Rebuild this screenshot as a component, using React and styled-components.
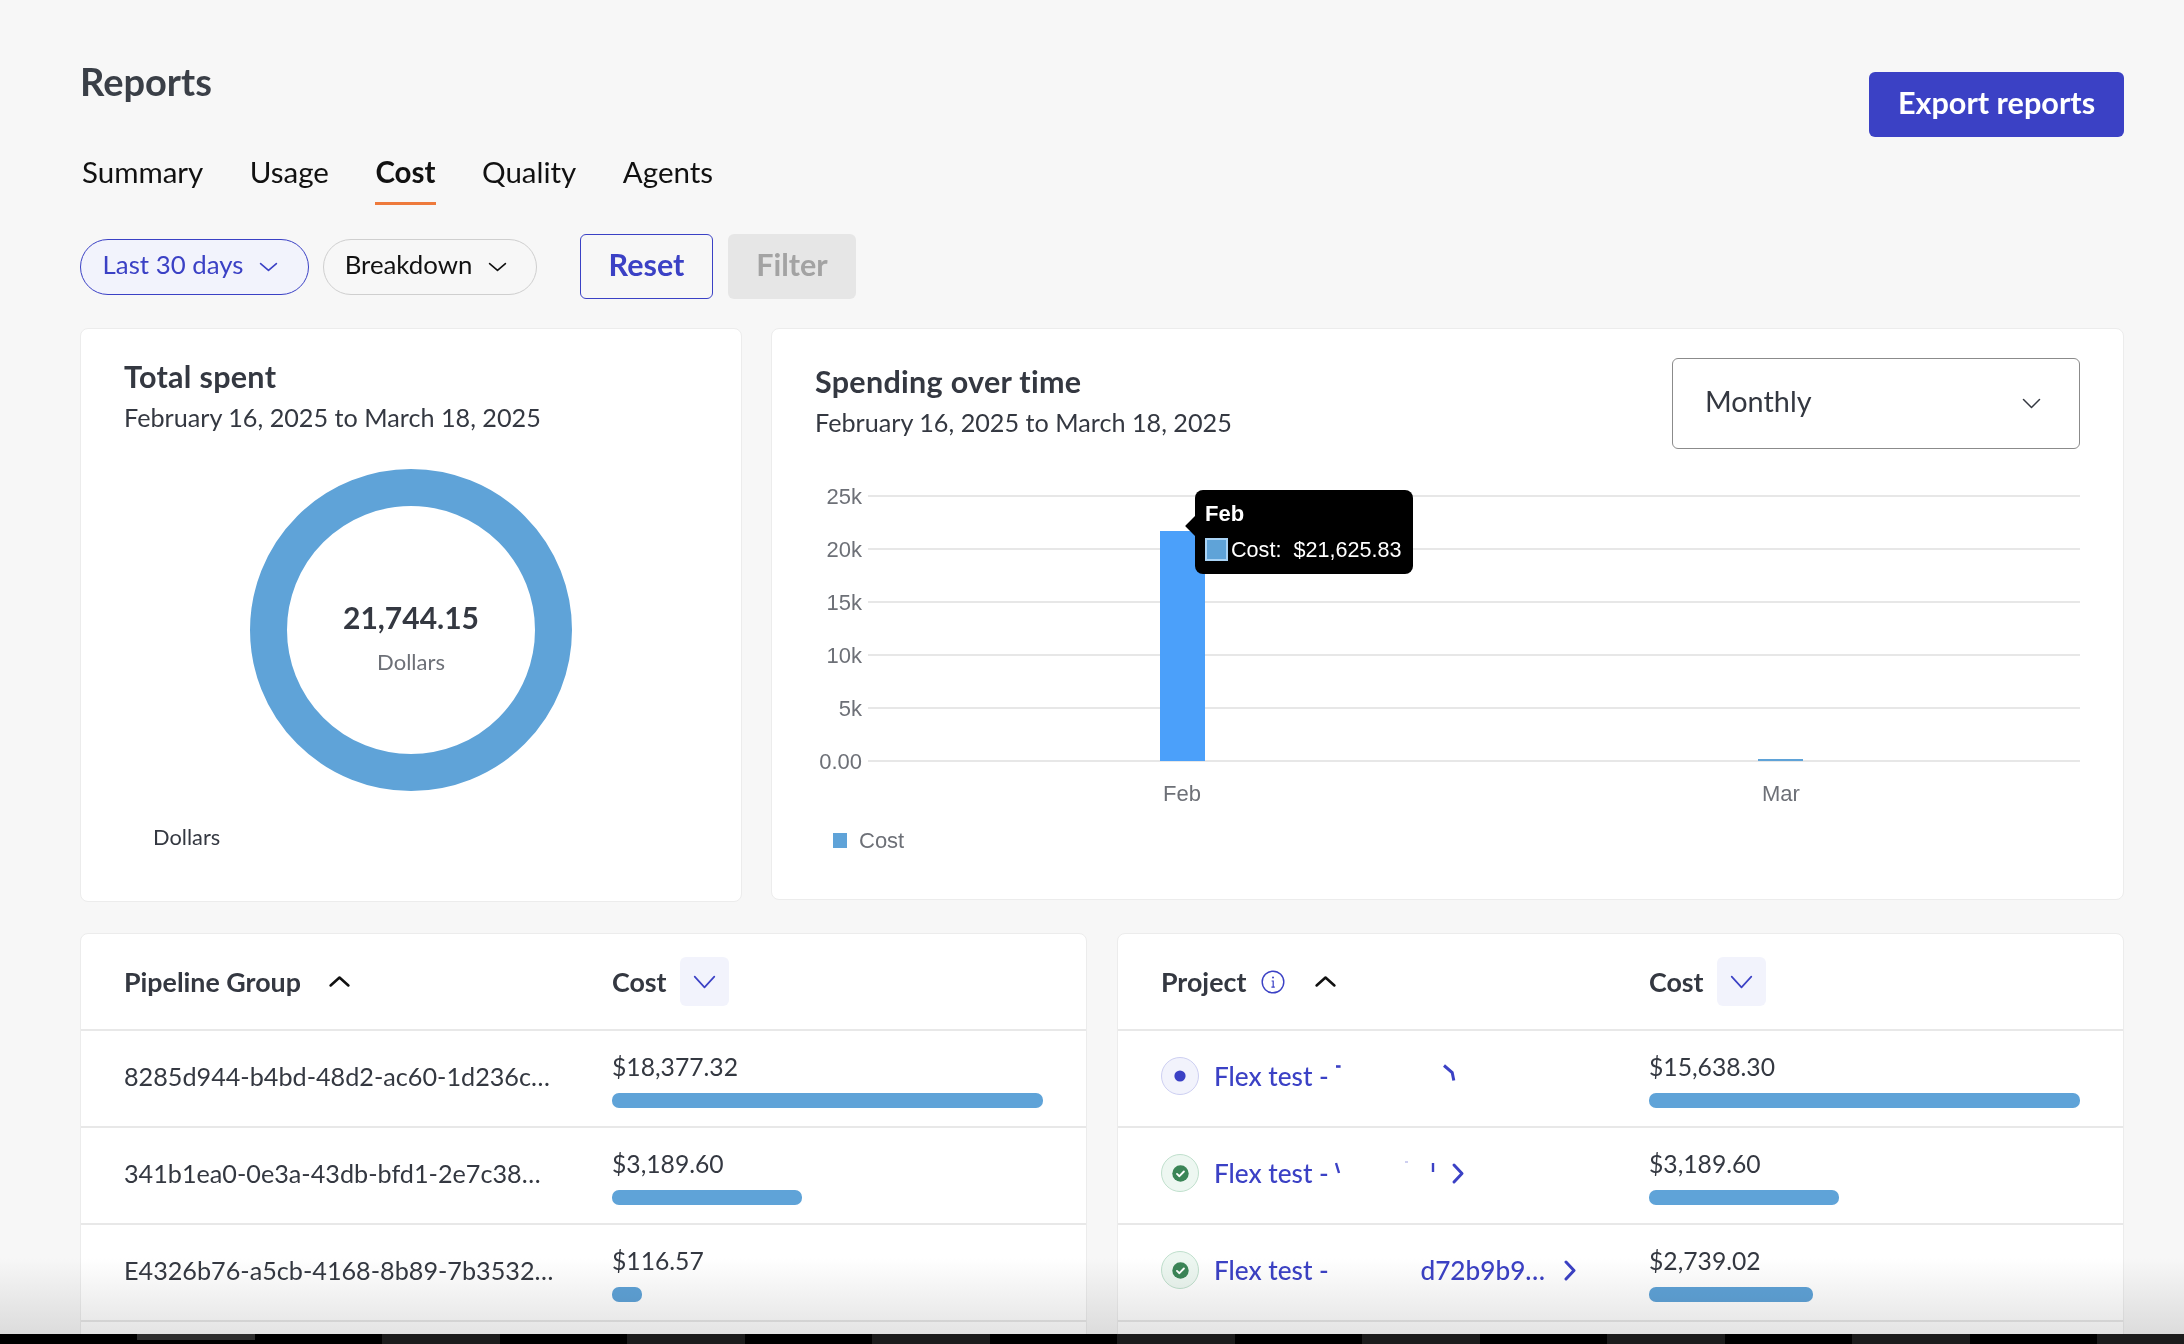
import styled, { createGlobalStyle } from "styled-components";

const BLUE = "#3b41c5";
const BAR = "#5fa3d8";
const INK = "#343841";
const LINE = "#e8e8e8";

const pipelineRows = [
  { name: "8285d944-b4bd-48d2-ac60-1d236c…", cost: "$18,377.32", width: 100 },
  { name: "341b1ea0-0e3a-43db-bfd1-2e7c38…", cost: "$3,189.60", width: 44 },
  { name: "E4326b76-a5cb-4168-8b89-7b3532…", cost: "$116.57", width: 7 },
];

const yTicks = [
  { label: "25k", y: 11 },
  { label: "20k", y: 64 },
  { label: "15k", y: 117 },
  { label: "10k", y: 170 },
  { label: "5k", y: 223 },
  { label: "0.00", y: 276 },
];

const Chevron = ({ dir = "down", w = 19, h = 10, sw = 1.6, color = "currentColor" }) => {
  const m = sw;
  const paths = {
    down: `M${m} ${m}L${w / 2} ${h - m}L${w - m} ${m}`,
    up: `M${m} ${h - m}L${w / 2} ${m}L${w - m} ${h - m}`,
    right: `M${m} ${m}L${w - m} ${h / 2}L${m} ${h - m}`,
  };
  return (
    <svg width={w} height={h} viewBox={`0 0 ${w} ${h}`} fill="none">
      <path d={paths[dir]} stroke={color} strokeWidth={sw} strokeLinecap="round" strokeLinejoin="round" />
    </svg>
  );
};

const InfoIcon = () => (
  <svg width="24" height="24" viewBox="0 0 24 24" fill="none">
    <circle cx="12" cy="12" r="10.8" stroke={BLUE} strokeWidth="1.4" />
    <circle cx="12" cy="7.6" r="1" fill={BLUE} />
    <path d="M10.6 11h1.6v6M10.4 17.2h3.4" stroke={BLUE} strokeWidth="1.2" />
  </svg>
);

const RunningIcon = () => (
  <StatusRing $bg="#f2f3fc" $border="#cdcff2">
    <svg width="12" height="12" viewBox="0 0 12 12">
      <circle cx="6" cy="6" r="5.6" fill={BLUE} />
    </svg>
  </StatusRing>
);

const DoneIcon = () => (
  <StatusRing $bg="#edf7f1" $border="#c0e0cd">
    <svg width="17" height="17" viewBox="0 0 17 17">
      <circle cx="8.5" cy="8.5" r="8.2" fill="#3b8557" />
      <path d="M5 8.9l2.4 2.3 4.5-4.7" fill="none" stroke="#fff" strokeWidth="1.9" strokeLinecap="round" strokeLinejoin="round" />
    </svg>
  </StatusRing>
);

// bits of the project names left showing around the redaction in the screenshot
const FirstRemnant = () => (
  <svg width="124" height="28" viewBox="0 0 124 28" fill="none">
    <path d="M1 4.5h4.6" stroke={BLUE} strokeWidth="2.6" />
    <path d="M109 3.5l8.2 7 1.6 8" stroke={BLUE} strokeWidth="3" />
  </svg>
);

const SecondRemnant = () => (
  <svg width="110" height="28" viewBox="0 0 110 28" fill="none">
    <path d="M1 4l3 10" stroke={BLUE} strokeWidth="2.4" />
    <path d="M70 3h3" stroke={BLUE} strokeWidth="1" opacity="0.5" />
    <path d="M98 4v9" stroke={BLUE} strokeWidth="2.4" />
  </svg>
);

const App = () => (
  <Page>
    <GlobalStyle />
    <Header>
      <div>
        <Title>Reports</Title>
        <Tabs>
          <Tab>Summary</Tab>
          <Tab>Usage</Tab>
          <Tab $active>Cost</Tab>
          <Tab>Quality</Tab>
          <Tab>Agents</Tab>
        </Tabs>
      </div>
      <ExportButton>Export reports</ExportButton>
    </Header>

    <Filters>
      <Pill $active $width={229}>
        Last 30 days <Chevron />
      </Pill>
      <Pill $width={214}>
        Breakdown <Chevron />
      </Pill>
      <ResetButton>Reset</ResetButton>
      <FilterButton>Filter</FilterButton>
    </Filters>

    <ChartRow>
      <TotalCard>
        <CardTitle>Total spent</CardTitle>
        <DateRange>February 16, 2025 to March 18, 2025</DateRange>
        <Donut>
          <svg width="322" height="322" viewBox="0 0 322 322" fill="none">
            <circle cx="161" cy="161" r="142.5" stroke={BAR} strokeWidth="37" />
          </svg>
          <DonutLabel>
            <DonutValue>21,744.15</DonutValue>
            <DonutUnit>Dollars</DonutUnit>
          </DonutLabel>
        </Donut>
        <DonutLegend>Dollars</DonutLegend>
      </TotalCard>

      <SpendingCard>
        <SpendingHeader>
          <SpendingTitles>
            <CardTitle>Spending over time</CardTitle>
            <DateRange>February 16, 2025 to March 18, 2025</DateRange>
          </SpendingTitles>
          <Select>
            <SelectText>Monthly</SelectText>
            <Chevron w={19} h={11} sw={1.5} color="#343841" />
          </Select>
        </SpendingHeader>
        <ChartArea>
          <svg width="1265" height="325" viewBox="0 0 1265 325" fill="none">
            {yTicks.map((t) => (
              <g key={t.label}>
                <line x1="53" x2="1265" y1={t.y} y2={t.y} stroke="#e7e7e7" strokeWidth="2" />
                <AxisText x="47" y={t.y + 7.5} textAnchor="end">
                  {t.label}
                </AxisText>
              </g>
            ))}
            <rect x="345" y="46" width="45" height="230" fill="#4ba0fa" />
            <rect x="943" y="274" width="45" height="2" fill={BAR} />
            <AxisText x="367" y="316" textAnchor="middle">Feb</AxisText>
            <AxisText x="966" y="316" textAnchor="middle">Mar</AxisText>
          </svg>
          <Tooltip>
            <TooltipTitle>Feb</TooltipTitle>
            <TooltipRow>
              <TooltipSwatch />
              <span>Cost:</span>
              <span>$21,625.83</span>
            </TooltipRow>
          </Tooltip>
        </ChartArea>
        <ChartLegend>
          <LegendSwatch />
          Cost
        </ChartLegend>
      </SpendingCard>
    </ChartRow>

    <TableRow>
      <TableCard>
        <TableHead>
          <HeadCell>
            Pipeline Group
            <SortUp>
              <Chevron dir="up" w={23} h={13} sw={2.6} color="#111" />
            </SortUp>
          </HeadCell>
          <HeadCell>
            Cost
            <SortBox>
              <Chevron w={23} h={14} sw={1.7} color={BLUE} />
            </SortBox>
          </HeadCell>
        </TableHead>
        {pipelineRows.map((row) => (
          <Row key={row.name}>
            <NameCell>{row.name}</NameCell>
            <CostCell>
              <CostValue>{row.cost}</CostValue>
              <CostBar $width={row.width} />
            </CostCell>
          </Row>
        ))}
      </TableCard>

      <TableCard>
        <TableHead>
          <HeadCell>
            Project
            <InfoSlot>
              <InfoIcon />
            </InfoSlot>
            <ProjectSort>
              <Chevron dir="up" w={23} h={13} sw={2.6} color="#111" />
            </ProjectSort>
          </HeadCell>
          <HeadCell>
            Cost
            <SortBox>
              <Chevron w={23} h={14} sw={1.7} color={BLUE} />
            </SortBox>
          </HeadCell>
        </TableHead>
        <Row>
          <ProjectCell>
            <RunningIcon />
            <ProjectLink>Flex test - </ProjectLink>
            <FirstRemnant />
          </ProjectCell>
          <CostCell>
            <CostValue>$15,638.30</CostValue>
            <CostBar $width={100} />
          </CostCell>
        </Row>
        <Row>
          <ProjectCell>
            <DoneIcon />
            <ProjectLink>Flex test - </ProjectLink>
            <SecondRemnant />
            <RowChevron>
              <Chevron dir="right" w={14} h={23} sw={3} color={BLUE} />
            </RowChevron>
          </ProjectCell>
          <CostCell>
            <CostValue>$3,189.60</CostValue>
            <CostBar $width={44} />
          </CostCell>
        </Row>
        <Row>
          <ProjectCell>
            <DoneIcon />
            <ProjectLink>Flex test - </ProjectLink>
            <RedactedGap />
            <ProjectLink>d72b9b9…</ProjectLink>
            <LastChevron>
              <Chevron dir="right" w={14} h={23} sw={3} color={BLUE} />
            </LastChevron>
          </ProjectCell>
          <CostCell>
            <CostValue>$2,739.02</CostValue>
            <CostBar $width={38} />
          </CostCell>
        </Row>
      </TableCard>
    </TableRow>

    <BottomFade />
    <Dock>
      {[0, 1, 2, 3, 4, 5, 6, 7, 8].map((i) => (
        <DockItem key={i} $first={i === 0} />
      ))}
    </Dock>
  </Page>
);

const GlobalStyle = createGlobalStyle`
  html, body {
    margin: 0;
    padding: 0;
    background: #f7f7f7;
  }
  body {
    font-family: Lato, "Open Sans", sans-serif;
    color: ${INK};
  }
`;

const Page = styled.div`
  position: relative;
  width: 2184px;
  height: 1344px;
  padding: 62px 60px 0 80px;
  box-sizing: border-box;
  overflow: hidden;
`;

const Header = styled.div`
  display: flex;
  justify-content: space-between;
  align-items: flex-start;
`;

const Title = styled.h1`
  margin: 0;
  font-size: 38px;
  line-height: 38px;
  font-weight: 700;
  color: #3a3f47;
`;

const Tabs = styled.div`
  display: flex;
  gap: 46.5px;
  margin: 50px 0 0 2px;
`;

const Tab = styled.div`
  font-size: 29.5px;
  line-height: 44px;
  padding-bottom: 8px;
  color: #111;
  font-weight: ${(p) => (p.$active ? 700 : 400)};
  border-bottom: 3px solid ${(p) => (p.$active ? "#ee7a3c" : "transparent")};
`;

const ExportButton = styled.button`
  width: 255px;
  height: 65px;
  margin-top: 10px;
  padding: 0 0 5px;
  border: none;
  border-radius: 6px;
  background: ${BLUE};
  color: #fff;
  font-family: inherit;
  font-size: 30.6px;
  font-weight: 700;
`;

const Filters = styled.div`
  display: flex;
  align-items: center;
  height: 65px;
  margin-top: 29px;
`;

const Pill = styled.div`
  display: flex;
  align-items: center;
  justify-content: center;
  gap: 16px;
  box-sizing: border-box;
  width: ${(p) => p.$width}px;
  height: 56px;
  margin-right: 14px;
  padding: 0 8px 6px 0;
  border-radius: 28px;
  border: 1px solid ${(p) => (p.$active ? BLUE : "#cfcfcf")};
  background: ${(p) => (p.$active ? "#f2f3fc" : "transparent")};
  color: ${(p) => (p.$active ? BLUE : "#111")};
  font-size: 25.8px;

  svg {
    margin-top: 6px;
  }
`;

const ResetButton = styled.button`
  box-sizing: border-box;
  width: 133px;
  height: 65px;
  margin-left: 29px;
  padding: 0 0 6px;
  border: 1.5px solid ${BLUE};
  border-radius: 6px;
  background: transparent;
  color: ${BLUE};
  font-family: inherit;
  font-size: 30.5px;
  font-weight: 700;
`;

const FilterButton = styled.button`
  width: 128px;
  height: 65px;
  margin-left: 15px;
  padding: 0 0 6px;
  border: none;
  border-radius: 6px;
  background: #e6e6e6;
  color: #a3a3a3;
  font-family: inherit;
  font-size: 30.5px;
  font-weight: 700;
`;

const ChartRow = styled.div`
  display: grid;
  grid-template-columns: 662px 1353px;
  gap: 29px;
  align-items: start;
  margin-top: 29px;
`;

const Card = styled.div`
  box-sizing: border-box;
  background: #fff;
  border: 1.5px solid #ececec;
  border-radius: 8px;
`;

const TotalCard = styled(Card)`
  height: 574px;
  padding: 30px 43px 0;
`;

const CardTitle = styled.div`
  font-size: 30.5px;
  line-height: 34px;
  letter-spacing: 0.3px;
  font-weight: 700;
  color: ${INK};
`;

const DateRange = styled.div`
  margin-top: 6px;
  font-size: 25.2px;
  line-height: 36px;
  color: ${INK};
`;

const Donut = styled.div`
  position: relative;
  width: 322px;
  height: 322px;
  margin: 34px auto 0;
`;

const DonutLabel = styled.div`
  position: absolute;
  inset: 0;
  display: flex;
  flex-direction: column;
  align-items: center;
  justify-content: center;
  padding-top: 15px;
  box-sizing: border-box;
`;

const DonutValue = styled.div`
  font-size: 30px;
  line-height: 36px;
  font-weight: 700;
  color: ${INK};
`;

const DonutUnit = styled.div`
  margin-top: 12px;
  font-size: 22px;
  line-height: 30px;
  color: #6d7077;
`;

const DonutLegend = styled.div`
  margin: 29px 0 0 29px;
  font-size: 21.8px;
  line-height: 34px;
  color: ${INK};
`;

const SpendingCard = styled(Card)`
  height: 572px;
  padding: 28.5px 43px 0;
`;

const SpendingHeader = styled.div`
  display: flex;
  justify-content: space-between;
  align-items: flex-start;
`;

const SpendingTitles = styled.div`
  padding-top: 6.5px;
`;

const Select = styled.div`
  display: flex;
  align-items: center;
  justify-content: space-between;
  box-sizing: border-box;
  width: 408px;
  height: 91px;
  padding: 0 38px 0 32px;
  border: 1.5px solid #8b8b8b;
  border-radius: 6px;
  color: ${INK};
`;

const SelectText = styled.span`
  font-size: 28.8px;
  padding-bottom: 4px;
`;

const ChartArea = styled.div`
  position: relative;
  height: 325px;
  margin-top: 36px;
`;

const AxisText = styled.text`
  font-family: "Liberation Sans", Arial, sans-serif;
  font-size: 22px;
  fill: #6d7077;
`;

const Tooltip = styled.div`
  position: absolute;
  left: 380px;
  top: 5px;
  box-sizing: border-box;
  width: 218px;
  height: 84px;
  padding: 9px 10px;
  background: #000;
  border-radius: 8px;
  color: #fff;
  font-family: "Liberation Sans", Arial, sans-serif;
  font-size: 21.6px;

  &::before {
    content: "";
    position: absolute;
    left: -7px;
    top: 29px;
    width: 14px;
    height: 14px;
    background: #000;
    transform: rotate(45deg);
  }
`;

const TooltipTitle = styled.div`
  font-size: 22px;
  line-height: 30px;
  font-weight: 700;
`;

const TooltipRow = styled.div`
  display: flex;
  align-items: center;
  gap: 3px;
  margin-top: 9px;
  line-height: 24px;
  white-space: nowrap;

  span + span {
    margin-left: 9px;
  }
`;

const TooltipSwatch = styled.i`
  display: block;
  flex: none;
  box-sizing: border-box;
  width: 23px;
  height: 23px;
  background: ${BAR};
  border: 2px solid #a9d3f5;
`;

const ChartLegend = styled.div`
  display: flex;
  align-items: center;
  gap: 12px;
  margin: 16px 0 0 18px;
  font-family: "Liberation Sans", Arial, sans-serif;
  font-size: 22px;
  line-height: 30px;
  color: #6d7077;
`;

const LegendSwatch = styled.i`
  display: block;
  width: 14px;
  height: 15px;
  background: ${BAR};
`;

const TableRow = styled.div`
  display: grid;
  grid-template-columns: 1007px 1007px;
  gap: 30px;
  margin-top: 31px;
`;

const TableCard = styled(Card)`
  height: 500px;
`;

const TableHead = styled.div`
  display: grid;
  grid-template-columns: 488px 1fr;
  align-items: center;
  height: 95.4px;
  padding: 0 43px;
  border-bottom: 2px solid ${LINE};
`;

const HeadCell = styled.div`
  display: flex;
  align-items: center;
  font-size: 26.8px;
  font-weight: 700;
  color: ${INK};
`;

const SortUp = styled.span`
  display: flex;
  margin-left: 27px;
`;

const InfoSlot = styled.span`
  display: flex;
  margin-left: 15px;
`;

const ProjectSort = styled.span`
  display: flex;
  margin-left: 29px;
`;

const SortBox = styled.span`
  display: flex;
  align-items: center;
  justify-content: center;
  width: 49px;
  height: 49px;
  margin-left: 13px;
  border-radius: 6px;
  background: #f2f3fc;
`;

const Row = styled.div`
  display: grid;
  grid-template-columns: 488px 1fr;
  box-sizing: border-box;
  height: 97px;
  padding: 0 43px;
  border-bottom: 2px solid ${LINE};
`;

const NameCell = styled.div`
  display: flex;
  align-items: center;
  padding-bottom: 5.6px;
  font-size: 25.2px;
  color: ${INK};
  white-space: nowrap;
`;

const ProjectCell = styled.div`
  display: flex;
  align-items: center;
  padding-bottom: 5.6px;
  white-space: pre;
`;

const StatusRing = styled.span`
  display: flex;
  align-items: center;
  justify-content: center;
  box-sizing: border-box;
  width: 38px;
  height: 38px;
  margin-right: 15px;
  border-radius: 50%;
  background: ${(p) => p.$bg};
  border: 1px solid ${(p) => p.$border};
`;

const ProjectLink = styled.span`
  font-size: 26.2px;
  font-weight: 500;
  color: ${BLUE};
`;

const RedactedGap = styled.span`
  width: 85px;
`;

const RowChevron = styled.span`
  display: flex;
  margin-left: 6px;
`;

const LastChevron = styled.span`
  display: flex;
  margin-left: 18px;
`;

const CostCell = styled.div`
  padding-top: 21px;
`;

const CostValue = styled.div`
  font-size: 24.7px;
  line-height: 30px;
  color: ${INK};
`;

const CostBar = styled.div`
  width: ${(p) => p.$width}%;
  height: 15px;
  margin-top: 11px;
  border-radius: 7px;
  background: ${BAR};
`;

const BottomFade = styled.div`
  position: absolute;
  left: 0;
  right: 0;
  bottom: 10px;
  height: 76px;
  background: linear-gradient(to bottom, #fff, #e4e4e4);
  mix-blend-mode: multiply;
`;

const Dock = styled.div`
  position: absolute;
  left: 0;
  right: 0;
  bottom: 0;
  height: 10px;
  display: flex;
  gap: 127px;
  padding-left: 137px;
  background: #000;
`;

const DockItem = styled.div`
  flex: 0 0 118px;
  height: ${(p) => (p.$first ? 6 : 10)}px;
  background: ${(p) => (p.$first ? "#2e2e2e" : "#1c1c1c")};
`;

export default App;
